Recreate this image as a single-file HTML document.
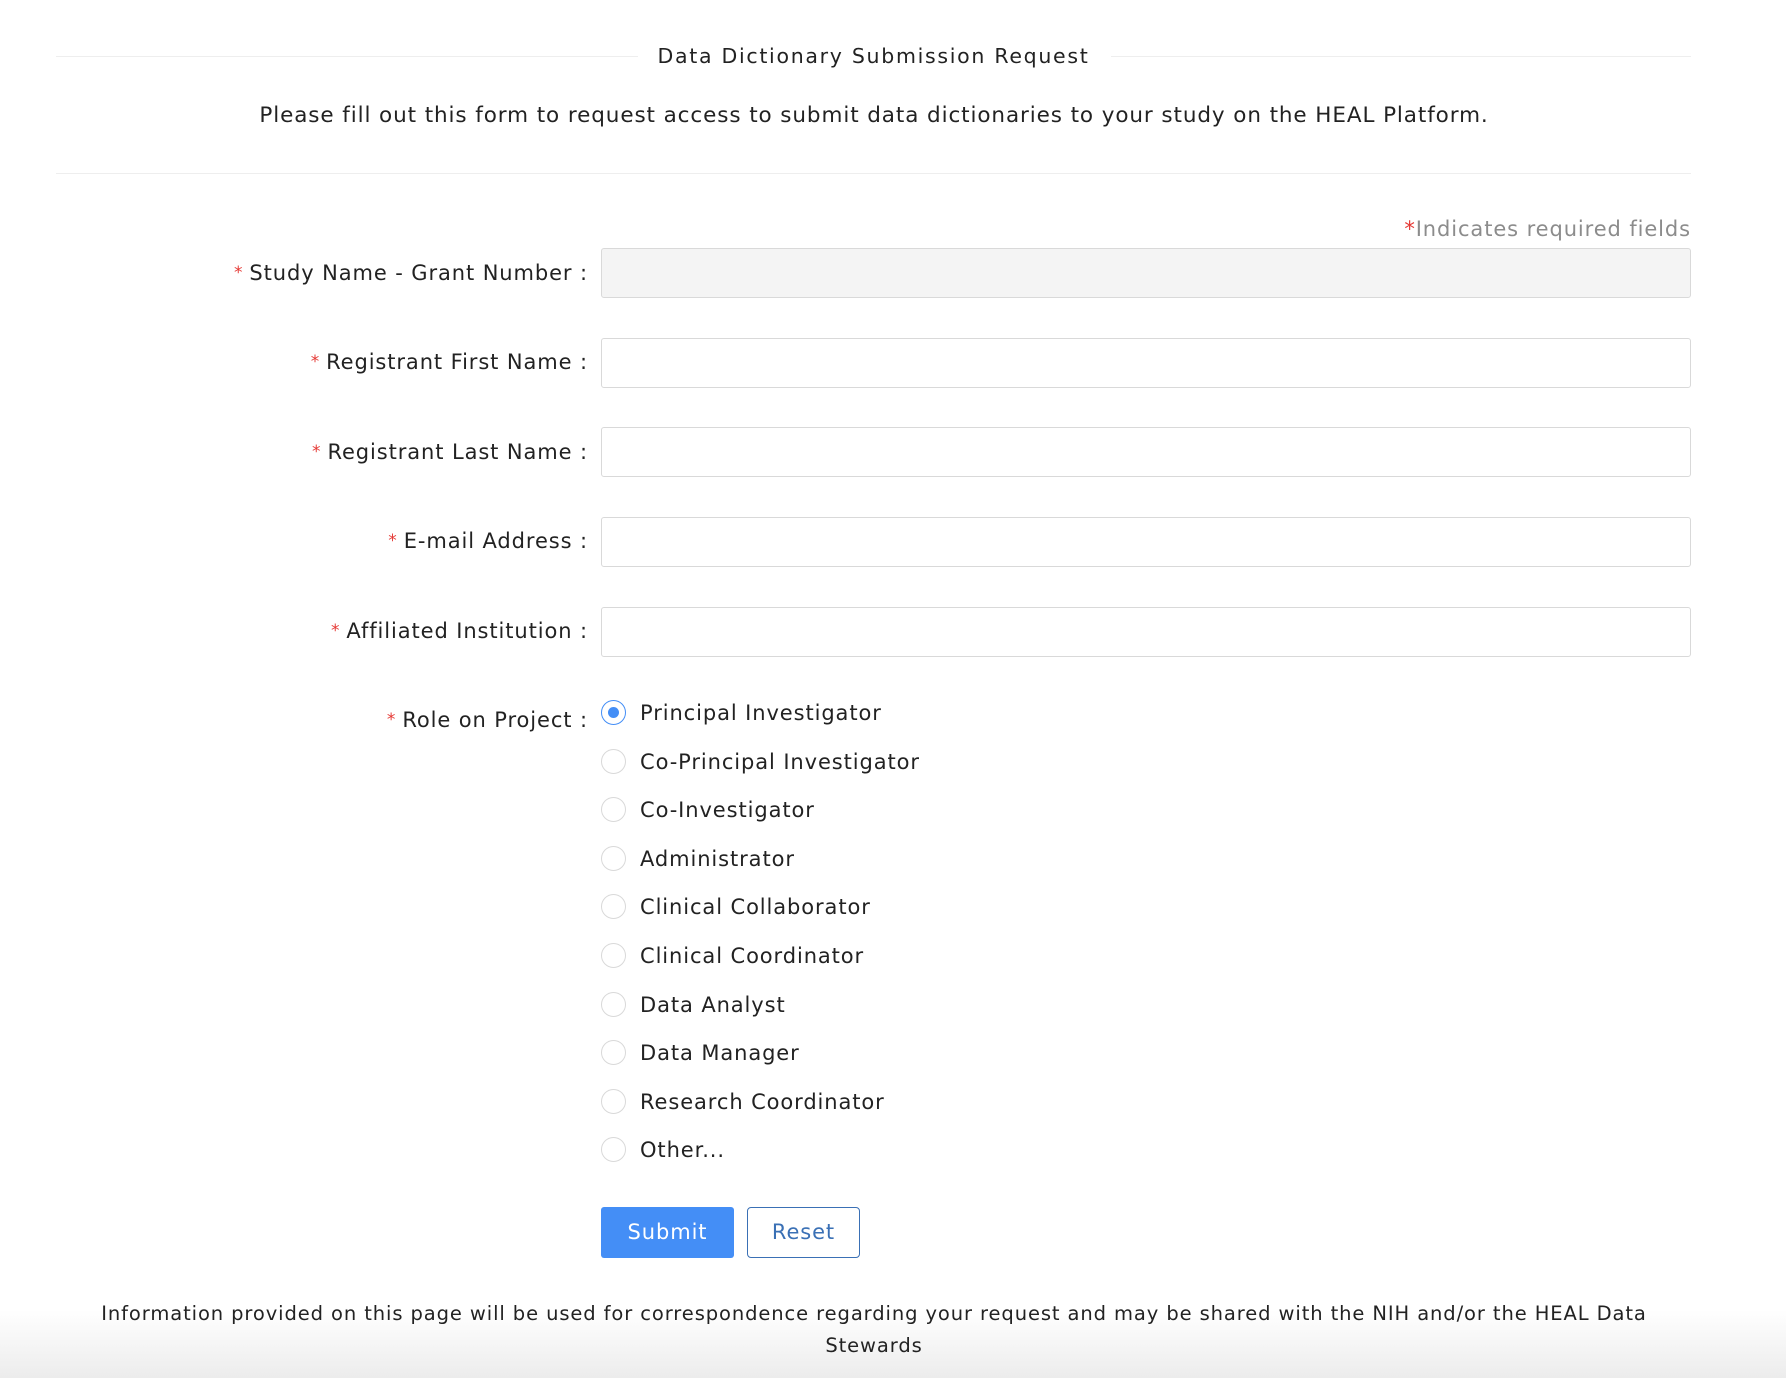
<!DOCTYPE html>
<html><head><meta charset="utf-8"><style>
*{box-sizing:border-box;margin:0;padding:0}
body{width:1786px;height:1378px;background:#fff;position:relative;overflow:hidden;font-family:"DejaVu Sans","Liberation Sans",sans-serif;color:#222;letter-spacing:0.9px}
.a{position:absolute;white-space:nowrap}
.line{position:absolute;height:1px;background:#eee}
.lbl{position:absolute;right:1198px;font-size:21px;line-height:26px;color:#222}
.lbl span{color:#e53935;font-size:17px;margin-right:6px;vertical-align:2px}
.inp{position:absolute;left:601px;width:1090px;height:50px;border:1px solid #d9d9d9;border-radius:3px;background:#fff}
.r{position:absolute;left:601px;width:25px;height:25px;border:1px solid #d9d9d9;border-radius:50%;background:#fff}
.rt{position:absolute;left:640px;font-size:21px;line-height:26px;color:#222}
</style></head><body>
<div class="line" style="left:56px;width:582px;top:56px"></div>
<div class="line" style="left:1111px;width:580px;top:56px"></div>
<div class="a" style="left:640px;width:467px;top:42px;font-size:20.5px;line-height:28px;text-align:center;letter-spacing:1.7px">Data Dictionary Submission Request</div>
<div class="a" style="left:0;width:1748px;top:101px;font-size:21.5px;line-height:30px;text-align:center">Please fill out this form to request access to submit data dictionaries to your study on the HEAL Platform.</div>
<div class="line" style="left:56px;width:1635px;top:173px"></div>
<div class="a" style="right:95px;top:215px;font-size:21px;line-height:28px;color:#8c8c8c"><span style="color:#e53935">*</span>Indicates required fields</div>

<div class="lbl" style="top:260px"><span>*</span>Study Name - Grant Number :</div>
<div class="inp" style="top:248px;background:#f4f4f4"></div>
<div class="lbl" style="top:349px"><span>*</span>Registrant First Name :</div>
<div class="inp" style="top:338px"></div>
<div class="lbl" style="top:439px"><span>*</span>Registrant Last Name :</div>
<div class="inp" style="top:427px"></div>
<div class="lbl" style="top:528px"><span>*</span>E-mail Address :</div>
<div class="inp" style="top:517px"></div>
<div class="lbl" style="top:618px"><span>*</span>Affiliated Institution :</div>
<div class="inp" style="top:607px"></div>

<div class="lbl" style="top:707px"><span>*</span>Role on Project :</div>
<div class="r" style="top:700px;border-color:#448ef6"><div style="position:absolute;left:6px;top:6px;width:11px;height:11px;border-radius:50%;background:#448ef6"></div></div>
<div class="rt" style="top:700px">Principal Investigator</div>
<div class="r" style="top:749px"></div><div class="rt" style="top:749px">Co-Principal Investigator</div>
<div class="r" style="top:797px"></div><div class="rt" style="top:797px">Co-Investigator</div>
<div class="r" style="top:846px"></div><div class="rt" style="top:846px">Administrator</div>
<div class="r" style="top:894px"></div><div class="rt" style="top:894px">Clinical Collaborator</div>
<div class="r" style="top:943px"></div><div class="rt" style="top:943px">Clinical Coordinator</div>
<div class="r" style="top:992px"></div><div class="rt" style="top:992px">Data Analyst</div>
<div class="r" style="top:1040px"></div><div class="rt" style="top:1040px">Data Manager</div>
<div class="r" style="top:1089px"></div><div class="rt" style="top:1089px">Research Coordinator</div>
<div class="r" style="top:1137px"></div><div class="rt" style="top:1137px">Other...</div>

<div class="a" style="left:601px;top:1207px;width:133px;height:51px;background:#448ef6;border-radius:3px;color:#fff;font-size:21px;line-height:51px;text-align:center">Submit</div>
<div class="a" style="left:747px;top:1207px;width:113px;height:51px;border:1px solid #3a70b5;border-radius:4px;color:#3a70b5;font-size:21px;line-height:49px;text-align:center">Reset</div>

<div class="a" style="left:0;width:1786px;height:68px;top:1310px;background:linear-gradient(#fff,#ececec)"></div>
<div class="a" style="left:0;width:1748px;top:1298px;font-size:19.5px;line-height:32px;text-align:center">Information provided on this page will be used for correspondence regarding your request and may be shared with the NIH and/or the HEAL Data<br>Stewards</div>
</body></html>
